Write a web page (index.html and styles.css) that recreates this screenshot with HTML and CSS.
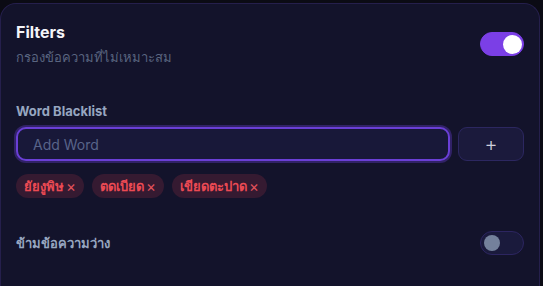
FILE: index.html
```html
<!DOCTYPE html>
<html lang="th">
<head>
  <meta charset="UTF-8">
  <title>Filters</title>
  <link rel="stylesheet" href="styles.css">
</head>
<body>

  <div class="card">
    <div class="header-row">
      <div>
        <h2>Filters</h2>
        <p class="subtitle">กรองข้อความที่ไม่เหมาะสม</p>
      </div>
      <label class="switch on"><span class="knob"></span></label>
    </div>

    <div class="label">Word Blacklist</div>
    <div class="input-group">
      <input type="text" placeholder="Add Word">
      <button class="add-btn">+</button>
    </div>

    <div class="tags">
      <span class="tag">ยัยงูพิษ<span class="x">×</span></span>
      <span class="tag">ตดเบียด<span class="x">×</span></span>
      <span class="tag">เขียดตะปาด<span class="x">×</span></span>
    </div>

    <div class="setting-row">
      <span class="label">ข้ามข้อความว่าง</span>
      <label class="switch"><span class="knob"></span></label>
    </div>
  </div>

</body>
</html>
```

FILE: styles.css
```css
* {
  margin: 0;
  padding: 0;
  box-sizing: border-box;
}

html, body {
  height: 100%;
  overflow: hidden;
}

body {
  font-family: Inter, 'Noto Sans', sans-serif;
  background: #0b0b14;
  color: #fff;
  padding: 3px 3px 0 0;
}

.card {
  height: 100%;
  background: #13132b;
  border: 1px solid #251f4c;
  border-bottom: none;
  border-radius: 16px 16px 0 0;
  padding: 18px 15px 0 15px;
}

.header-row {
  display: flex;
  justify-content: space-between;
  align-items: center;
}

h2 {
  font-size: 16px;
  line-height: 20px;
  font-weight: 700;
  color: #f4f4f8;
}

.subtitle {
  margin-top: 6px;
  font-size: 13px;
  line-height: 18px;
  color: #5a6580;
}

/* toggle */
.switch {
  display: flex;
  align-items: center;
  width: 44px;
  height: 24px;
  border-radius: 12px;
  background: #1a1a3c;
  border: 1px solid #2c2560;
  padding: 0 3px;
}

.switch .knob {
  width: 16px;
  height: 16px;
  border-radius: 50%;
  background: #74819c;
}

.switch.on {
  background: #7b3fe6;
  border-color: #7b3fe6;
  justify-content: flex-end;
  padding: 0 1px;
}

.switch.on .knob {
  width: 19px;
  height: 19px;
  background: #fff;
}

.label {
  display: block;
  font-size: 13px;
  line-height: 16px;
  font-weight: 700;
  color: #97a6c0;
}

.card > .label {
  margin-top: 37px;
  margin-bottom: 8px;
}

.input-group {
  display: flex;
  gap: 8px;
}

input {
  flex: 1;
  height: 34px;
  padding: 0 15px;
  background: #181839;
  border: 2px solid #6a3fd6;
  border-radius: 10px;
  box-shadow: 0 0 0 2px rgba(106, 63, 214, 0.35);
  color: #fff;
  font-family: inherit;
  font-size: 14px;
  outline: none;
}

input::placeholder {
  color: #58648a;
}

.add-btn {
  width: 66px;
  height: 34px;
  background: #1b1a3c;
  border: 1px solid #2c2760;
  border-radius: 9px;
  color: #cfd0dc;
  font-family: inherit;
  font-size: 20px;
  font-weight: 300;
  line-height: 1;
  cursor: pointer;
}

.tags {
  display: flex;
  gap: 8px;
  margin-top: 13px;
}

.tag {
  display: flex;
  align-items: center;
  gap: 2px;
  height: 24px;
  padding: 0 8px 0 8px;
  border-radius: 12px;
  background: #351a31;
  color: #ec4a54;
  font-size: 13px;
  font-weight: 700;
}

.tag .x {
  font-weight: 400;
  font-size: 15px;
  color: #e2515a;
}

.setting-row {
  display: flex;
  justify-content: space-between;
  align-items: center;
  margin-top: 33px;
}
```
